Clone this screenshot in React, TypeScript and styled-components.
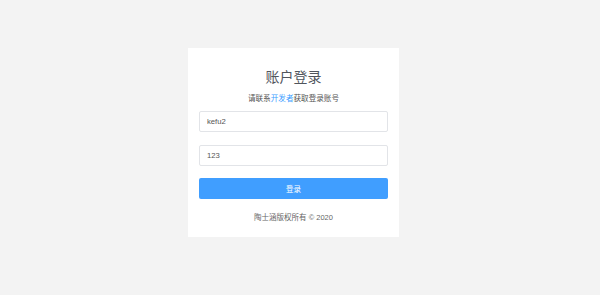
import React from 'react'
import styled, { createGlobalStyle } from 'styled-components'

const Global = createGlobalStyle`
    html, body {
        margin: 0;
        padding: 0;
        background: #f3f3f3;
        font-family: "Liberation Sans", "Noto Sans CJK SC", sans-serif;
    }
`

const Page_ = styled.div`
    width: 600px;
    height: 295px;
    padding: 48px 0 0 188px;
    box-sizing: border-box;
`

const Card_ = styled.div`
    width: 211px;
    height: 189px;
    box-sizing: border-box;
    background: #fff;
    padding: 19px 11px 0;
    display: flex;
    flex-direction: column;
    align-items: stretch;
`

const Title_ = styled.h2`
    margin: 0;
    font-size: 14px;
    line-height: 20px;
    font-weight: normal;
    color: #50555c;
    text-align: center;
`

const Sub_ = styled.p`
    margin: 6px 0 0;
    font-size: 7.6px;
    line-height: 12px;
    color: #555;
    text-align: center;

    a {
        color: #409eff;
        text-decoration: none;
    }
`

const Input_ = styled.input`
    box-sizing: border-box;
    height: 21px;
    margin-top: ${({ $gap }: { $gap: number }) => $gap}px;
    border: 1px solid #e2e4e8;
    border-radius: 2px;
    padding: 0 7px;
    font-family: inherit;
    font-size: 7.7px;
    color: #555;
    outline: none;
    background: #fff;
`

const Button_ = styled.button`
    height: 21px;
    margin-top: 12px;
    border: none;
    border-radius: 2px;
    background: #409eff;
    color: #fff;
    font-family: inherit;
    font-size: 7.5px;
`

const Footer_ = styled.div`
    margin-top: 13px;
    font-size: 7.5px;
    line-height: 12px;
    color: #666;
    text-align: center;
`

export default function App() {
    return (
        <Page_>
            <Global />
            <Card_>
                <Title_>账户登录</Title_>
                <Sub_>
                    请联系<a href="#">开发者</a>获取登录账号
                </Sub_>
                <Input_ $gap={6} defaultValue="kefu2" />
                <Input_ $gap={13} defaultValue="123" type="text" />
                <Button_>登录</Button_>
                <Footer_>陶士涵版权所有 © 2020</Footer_>
            </Card_>
        </Page_>
    )
}
